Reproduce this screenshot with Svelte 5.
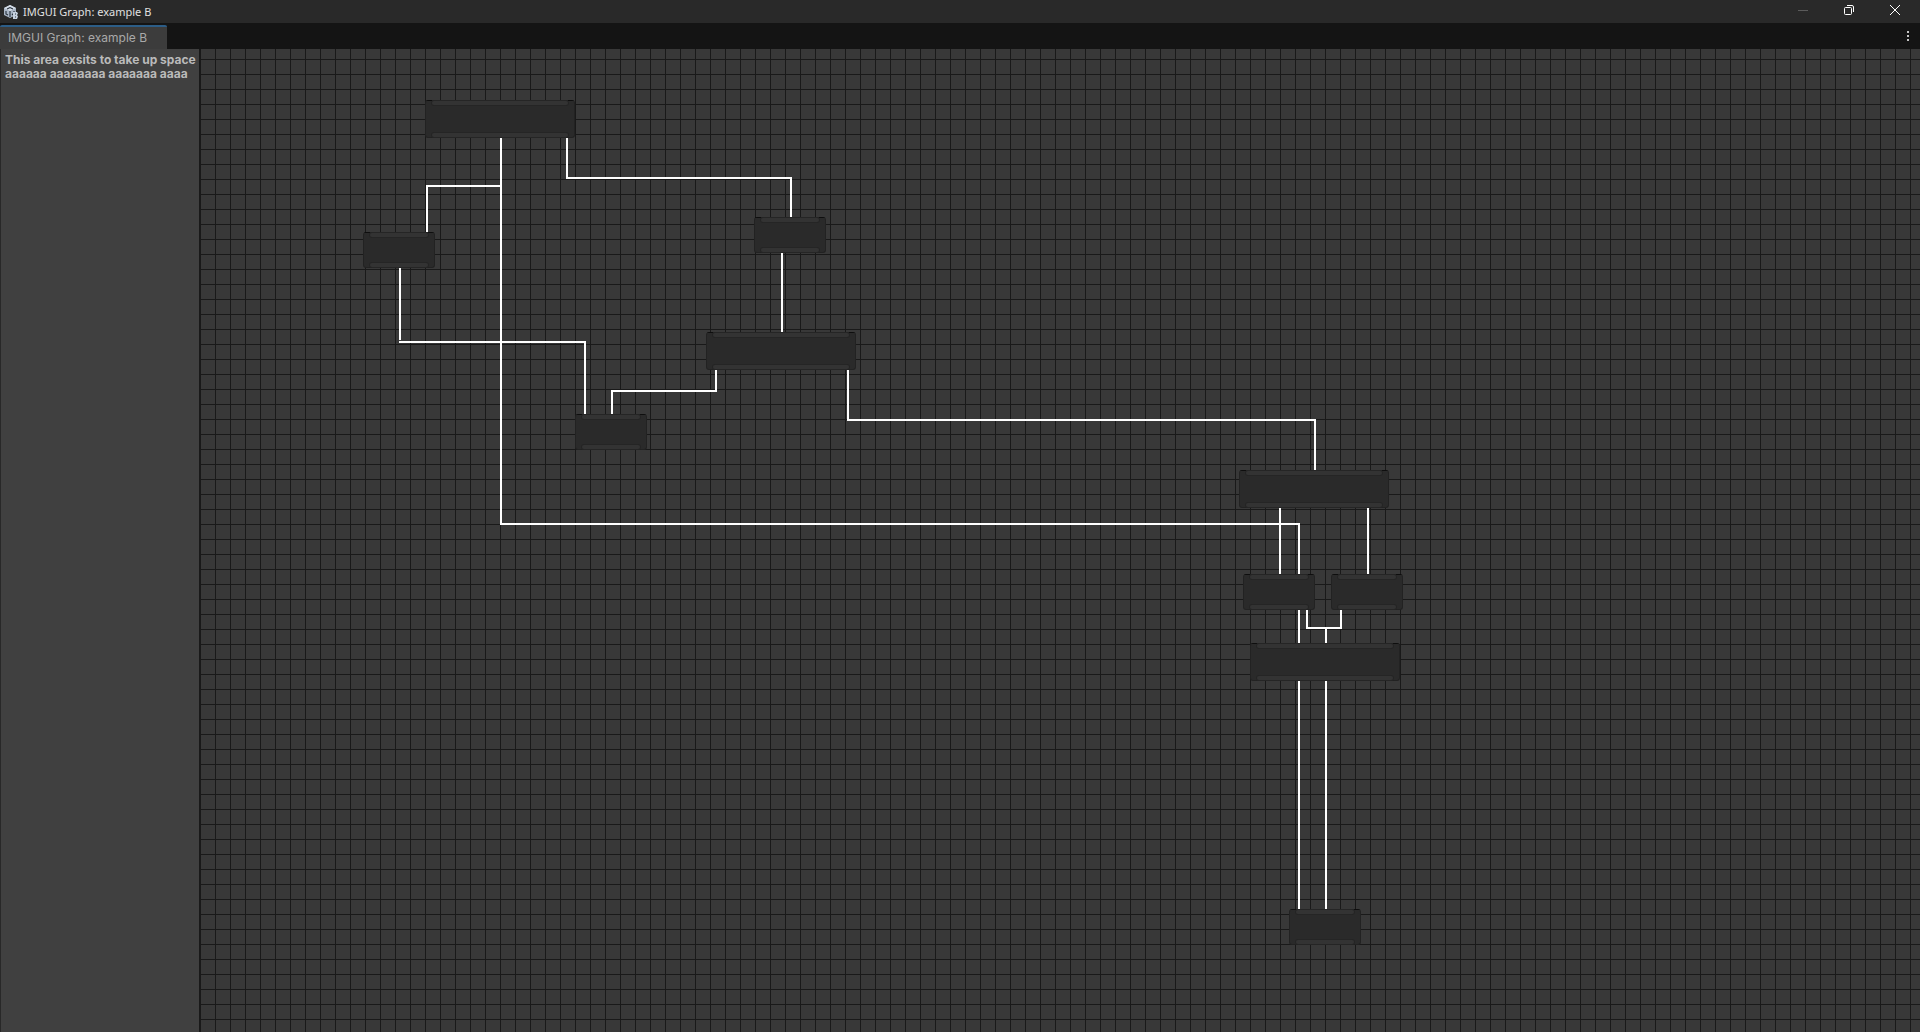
<script>
  const nodes = [
    { x: 225, y: 51, wide: true },
    { x: 163, y: 183 },
    { x: 554, y: 168 },
    { x: 506, y: 283, wide: true },
    { x: 375, y: 365 },
    { x: 1039, y: 421, wide: true },
    { x: 1043, y: 525 },
    { x: 1131, y: 525 },
    { x: 1050, y: 594, wide: true },
    { x: 1089, y: 860 }
  ];
  const links = [
    'M301 89V475H1099V525',
    'M301 137H227V183',
    'M367 89V129H591V168',
    'M582 204V283',
    'M200 219V291',
    'M199 293H385V365',
    'M516 321V342H412V365',
    'M648 321V371H1115V421',
    'M1080 459V525',
    'M1168 459V525',
    'M1099 561V594',
    'M1107 561V579H1141V561',
    'M1126 579V594',
    'M1099 632V860',
    'M1126 632V860'
  ];
</script>

<div class="window">
  <header class="titlebar">
    <svg class="logo" viewBox="0 0 16 16" aria-hidden="true">
      <path d="M7 1L13 4V11L7 14L1 11V4Z" fill="#a9b5c5" />
      <path d="M7 1L13 4L7 7L1 4Z" fill="#d5dde8" />
      <path d="M4 5L7 3.500L10 5M7 7V13M3 7V10L5 11M11 7V9L9 11" fill="none" stroke="#26303c" stroke-width="1.100" />
      <path d="M10 8H14L15 9.500L14 11L15 12.500L14 15H10Z" fill="#c6d1df" />
      <path d="M12 10H13M12 13H13" stroke="#26303c" />
    </svg>
    <h1>IMGUI Graph: example B</h1>
    <div class="controls">
      <button aria-label="Minimize" disabled><svg viewBox="0 0 12 12"><path d="M1 6.500H11" stroke="#5b5b5b" /></svg></button>
      <button aria-label="Restore"><svg viewBox="0 0 12 12"><rect x="1.500" y="3.500" width="7" height="7" rx="1" /><path d="M4 1.500H9Q10.500 1.500 10.500 3V8" /></svg></button>
      <button aria-label="Close"><svg viewBox="0 0 12 12"><path d="M1 1L11 11M11 1L1 11" /></svg></button>
    </div>
  </header>
  <div class="tabs">
    <button class="tab">IMGUI Graph: example B</button>
    <button class="menu" aria-label="Menu"><i></i><i></i><i></i></button>
  </div>
  <main>
    <aside>This area exsits to take up space<br />aaaaaa aaaaaaaa aaaaaaa aaaa</aside>
    <section class="canvas" aria-label="Graph">
      <svg class="links" aria-hidden="true">
        {#each links as d}<path {d} />{/each}
      </svg>
      {#each nodes as n}
        <div class="node" class:wide={n.wide} style="left: {n.x}px; top: {n.y}px"><span></span><span></span></div>
      {/each}
    </section>
  </main>
</div>

<style>
  :global(body) { margin: 0; background: #383838; }
  .window { display: flex; flex-direction: column; height: 100vh; overflow: hidden; font-family: Inter, sans-serif; }
  .titlebar { display: flex; align-items: center; height: 23px; padding: 0 2px 0 3px; background: #292929; flex: none; }
  .logo { width: 16px; height: 16px; }
  h1 { margin: 0 0 0 4px; flex: 1; font: 11px/16px "Noto Sans", sans-serif; color: #e0e0e0; }
  button { border: 0; padding: 0; margin: 0; background: none; font: inherit; }
  .controls { display: flex; align-self: flex-start; }
  .controls button { display: grid; place-items: center; width: 46px; height: 20px; }
  .controls svg { width: 12px; height: 12px; fill: none; stroke: #fff; }
  .tabs { display: flex; justify-content: space-between; align-items: flex-end; height: 26px; background: #141414; flex: none; }
  .tab { box-sizing: border-box; width: 167px; height: 24px; padding-left: 8px; border-top: 2px solid #2c5d87; border-radius: 2px 2px 0 0; background: #3c3c3c; color: #a9a9a9; text-align: left; font-size: 12px; line-height: 22px; }
  .menu { display: flex; flex-direction: column; align-items: center; justify-content: center; gap: 2px; width: 24px; height: 26px; }
  .menu i { width: 2px; height: 2px; background: #c4c4c4; }
  main { display: flex; flex: 1; min-height: 0; }
  aside { box-sizing: border-box; width: 200px; flex: none; padding: 4px 0 0 4px; border-left: 1px solid #282828; border-right: 1px solid #191919; background: #404040; color: #bababa; font-size: 12px; font-weight: 700; line-height: 14px; white-space: nowrap; }
  .canvas { position: relative; flex: 1; overflow: hidden; background-color: #383838; background-image: linear-gradient(to right, #191919 1px, transparent 1px), linear-gradient(#191919 1px, transparent 1px); background-size: 15px 15px; background-position: 0 10px; }
  .links { position: absolute; inset: 0; width: 100%; height: 100%; fill: none; stroke: #fff; stroke-width: 2; }
  .node { position: absolute; box-sizing: border-box; display: flex; flex-direction: column; justify-content: space-between; width: 72px; height: 36px; padding: 0 6px; border: 1px solid #222; border-top-color: transparent; border-radius: 3px; background: linear-gradient(to right, #0e0e0e 7px, #222 7px, #222 calc(100% - 7px), #0e0e0e calc(100% - 7px)) border-box top / 100% 1px no-repeat, #2a2a2a border-box; }
  .wide { width: 150px; height: 38px; }
  .node span { height: 4px; border-radius: 2px; background: #333; box-shadow: 0 0 0 1px #252525; }
</style>
